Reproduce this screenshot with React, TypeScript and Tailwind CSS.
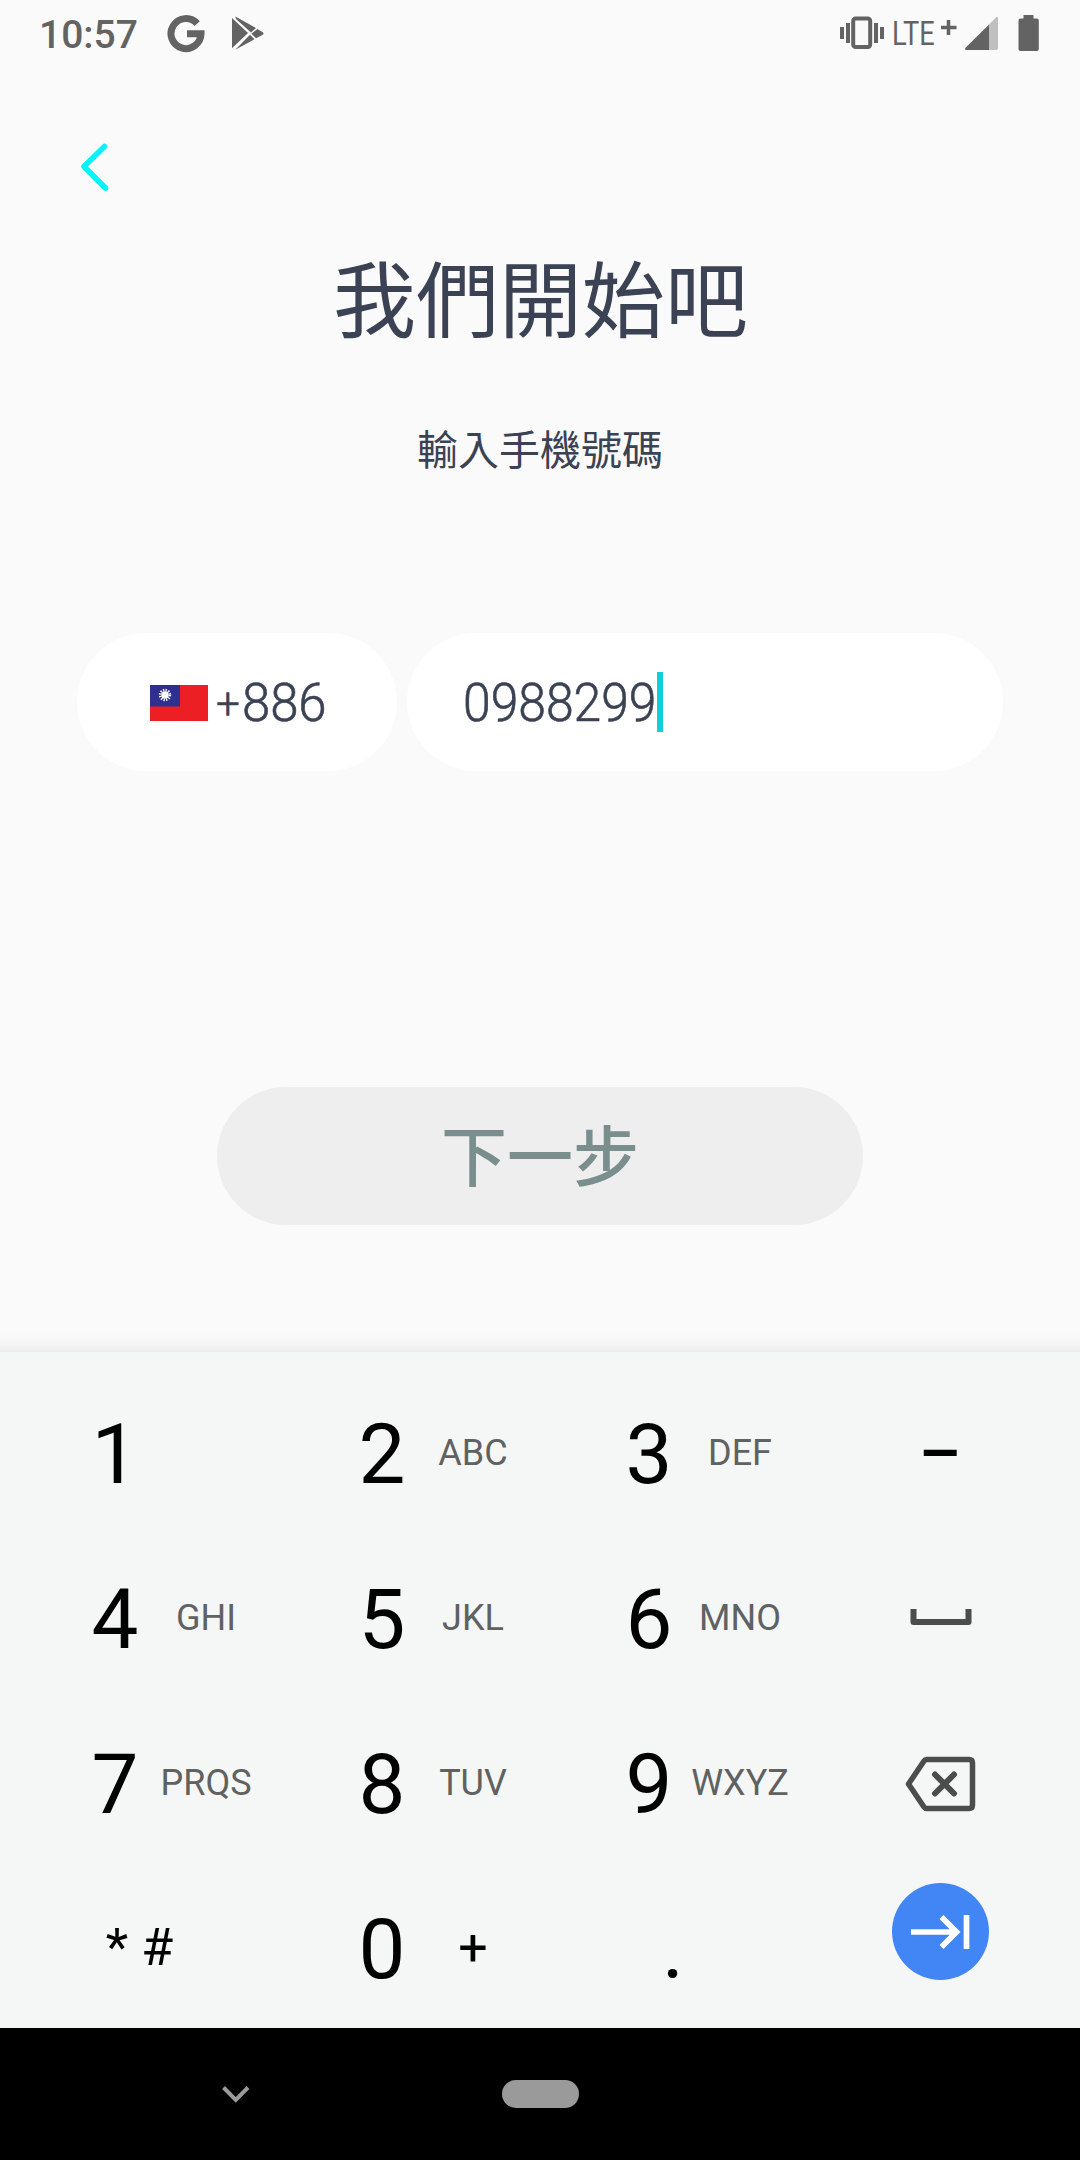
import type { ReactNode } from "react";

function StatusBar() {
  return (
    <header className="flex h-[66px] items-start justify-between pl-[39px] pr-[41px] pt-[11px] text-[#636363]">
      <div className="flex">
        <span className="mt-px w-[128px] text-[39px] font-medium leading-[46px]">10:57</span>
        <svg className="mt-[4px] h-[38px] w-[38px]" viewBox="0 0 38 38" fill="none" stroke="currentColor" strokeWidth="7">
          <path d="M30.2 8.6A15 15 0 1 0 34 18.8H20" />
        </svg>
        <svg className="ml-[26px] mt-[4px] h-[37px] w-[34px]" viewBox="0 0 34 37" fill="currentColor">
          <path d="M1 3l16 15L1 33.300z" />
          <path d="M4.300 1.600L25 13l-5 4.500L5 4z" />
          <path d="M4.300 34.800L23.500 24.300 19 19.700z" />
          <path d="M26.300 14l5.500 3.200q1.500 1.300 0 2.500L25 23.300l-4.600-4.600z" />
        </svg>
      </div>
      <div className="flex">
        <svg className="mt-[5px] h-[34px] w-[46px]" viewBox="0 0 46 34" fill="currentColor">
          <rect x="14.200" y="2.500" width="17" height="28.500" rx="2.500" fill="none" stroke="currentColor" strokeWidth="4" />
          <path d="M1 11h4v12H1zM7 7h4v20H7zM35 7h4v20h-4zM41 11h4v12h-4z" />
        </svg>
        <span className="ml-[7px] w-[46px] origin-left scale-x-[0.8] whitespace-nowrap text-[34px] leading-[44px]">LTE</span>
        <svg className="ml-[3px] mt-[8px] h-[17px] w-[16px]" viewBox="0 0 16 17" stroke="currentColor" strokeWidth="3.500">
          <path d="M0 8.500h15.500M7.500 1v15" />
        </svg>
        <svg className="ml-[7px] mt-[5px] h-[35px] w-[35px]" viewBox="0 0 35 35">
          <path d="M32.500 1L25 8.500V34h7q2 0 2-2V1.500q-.5-1.200-1.500-.5z" fill="#bfbfbf" />
          <path d="M25 8.500L1.300 32q-.8 2 .7 2h23z" fill="currentColor" />
        </svg>
        <svg className="ml-[19px] mt-[4px] h-[36px] w-[21px]" viewBox="0 0 21 36" fill="currentColor">
          <path d="M5.500 0h10v3.500h3.300q2 0 2 2V34q0 2-2 2H2.500q-2 0-2-2V5.500q0-2 2-2h3z" />
        </svg>
      </div>
    </header>
  );
}

function Flag() {
  return (
    <svg className="mt-[2px] h-[36px] w-[58px]" viewBox="0 0 58 36">
      <rect width="58" height="36" fill="#ec1f24" />
      <rect width="30" height="21.500" fill="#2e2f8e" />
      <circle cx="15" cy="10" r="5" fill="none" stroke="#fff" strokeWidth="2.500" strokeDasharray="1.300 1.318" />
      <circle cx="15" cy="10" r="3.800" fill="#fff" />
    </svg>
  );
}

function Key({ digit, label }: { digit: string; label?: string }) {
  return (
    <div className="flex items-center justify-center pt-2">
      <span className="w-[91px] text-center text-[83.500px] leading-none text-black">{digit}</span>
      <span className="mb-1 flex w-[91px] justify-center text-[36px] leading-none text-[#606161]">{label}</span>
    </div>
  );
}

function Cell({ children, className }: { children: ReactNode; className: string }) {
  return <div className={`flex items-center justify-center ${className}`}>{children}</div>;
}

function Keypad() {
  return (
    <section className="grid h-[676px] grid-cols-[267px_267px_267px_224px] grid-rows-[165px_165px_165px_165px] bg-[#f5f7f7] pl-[27px] pt-4">
      <Key digit="1" />
      <Key digit="2" label="ABC" />
      <Key digit="3" label="DEF" />
      <Cell className="pt-[6px] text-[66px] font-medium leading-none text-black">–</Cell>

      <Key digit="4" label="GHI" />
      <Key digit="5" label="JKL" />
      <Key digit="6" label="MNO" />
      <Cell className="pl-px pt-[3px]">
        <svg className="h-[16px] w-[62px]" viewBox="0 0 62 16" fill="none" stroke="#4b4c4c" strokeWidth="6" strokeLinejoin="round">
          <path d="M3.500 0v13h55V0" />
        </svg>
      </Cell>

      <Key digit="7" label="PRQS" />
      <Key digit="8" label="TUV" />
      <Key digit="9" label="WXYZ" />
      <Cell className="pt-[6px]">
        <svg className="h-[56px] w-[72px]" viewBox="0 0 72 56" fill="none" stroke="#4b4c4c" strokeWidth="5.500">
          <path d="M23 3.500h42q3.500 0 3.500 3.500v42q0 3.500-3.500 3.500H23q-2 0-3-1.500L4.500 28 20 5q1-1.500 3-1.500z" strokeLinejoin="round" />
          <path d="M31 18.500l19 19M50 18.500l-19 19" strokeLinecap="round" strokeWidth="6" />
        </svg>
      </Cell>

      <Cell className="pr-[42px] pt-1 text-[52px] leading-none text-black">* #</Cell>
      <div className="flex items-center justify-center pt-2 text-black">
        <span className="w-[91px] text-center text-[83.500px] leading-none">0</span>
        <span className="mb-1 w-[91px] text-center text-[52px] leading-none">+</span>
      </div>
      <Cell className="pr-[43px] pt-2 text-[83.500px] leading-none text-black">.</Cell>
      <Cell className="pb-[28px] pl-px">
        <div className="flex h-[97px] w-[97px] items-center justify-center rounded-full bg-[#4285f4]">
          <svg className="h-[36px] w-[60px]" viewBox="0 0 60 36" fill="none" stroke="#fff" strokeWidth="5.700">
            <path d="M0 18h46M30.500 3l15 15-15 15M55.500 1v34" />
          </svg>
        </div>
      </Cell>
    </section>
  );
}

export default function App() {
  return (
    <div
      lang="zh-Hant"
      className="flex h-[2160px] w-[1080px] flex-col overflow-hidden bg-[#fafafa] font-['Roboto','Noto_Sans_CJK_TC',sans-serif] text-[#3b4253]"
    >
      <StatusBar />
      <main className="flex h-[1286px] flex-col items-center px-[77px]">
        <button className="mt-[76px] flex w-full" aria-label="返回">
          <svg className="ml-[3px] h-[50px] w-[32px]" viewBox="0 0 32 50" fill="none" stroke="#00f4fa" strokeWidth="5.500" strokeLinecap="round" strokeLinejoin="round">
            <path d="M24.500 4.500L4 24.500l21.500 21.500" />
          </svg>
        </button>
        <h1 className="mt-[43px] h-[120px] pl-px font-['Noto_Sans_CJK_TC',sans-serif] text-[83px] leading-[120px]">我們開始吧</h1>
        <p className="mt-[62px] h-[60px] font-['Noto_Sans_CJK_TC',sans-serif] text-[41px] leading-[60px]">輸入手機號碼</p>
        <div className="mt-[156px] flex w-full justify-between">
          <div className="flex h-[138px] w-[320px] items-center rounded-full bg-white pl-[73px]">
            <Flag />
            <span className="ml-[8px] mt-[4px] flex origin-left scale-x-[0.96] items-center font-light [-webkit-text-stroke:0.600px_#3b4253]">
              <span className="w-[27px] text-[44px] leading-none">+</span>
              <span className="text-[53px]">886</span>
            </span>
          </div>
          <div className="flex h-[138px] w-[596px] items-center rounded-full bg-white pl-[56px]">
            <span className="mt-[4px] w-[194px] origin-left scale-x-[0.94] text-[53px] font-light [-webkit-text-stroke:0.600px_#3b4253]">0988299</span>
            <span className="h-[60px] w-[6px] bg-[#0fd0d8]" />
          </div>
        </div>
        <button className="mt-[316px] flex h-[138px] w-[646px] items-center justify-center rounded-full bg-[#eeeeee] pb-[8px] font-['Noto_Sans_CJK_TC',sans-serif] text-[66px] font-medium text-[#7b8e8e]">
          下一步
        </button>
        <div className="-mx-[77px] mt-auto h-[18px] w-[1080px] bg-linear-to-b from-[#fafafa] via-[#f6f6f6] to-[#ececec]" />
      </main>
      <Keypad />
      <nav className="flex h-[132px] items-center bg-black">
        <svg className="ml-[221px] h-[18px] w-[30px]" viewBox="0 0 30 18" fill="none" stroke="#9a9a9a" strokeWidth="4">
          <path d="M2.500 2.500l12.300 12.300L27 2.500" />
        </svg>
        <div className="ml-[251px] h-[28px] w-[77px] rounded-full bg-[#9a9a9a]" />
      </nav>
    </div>
  );
}
